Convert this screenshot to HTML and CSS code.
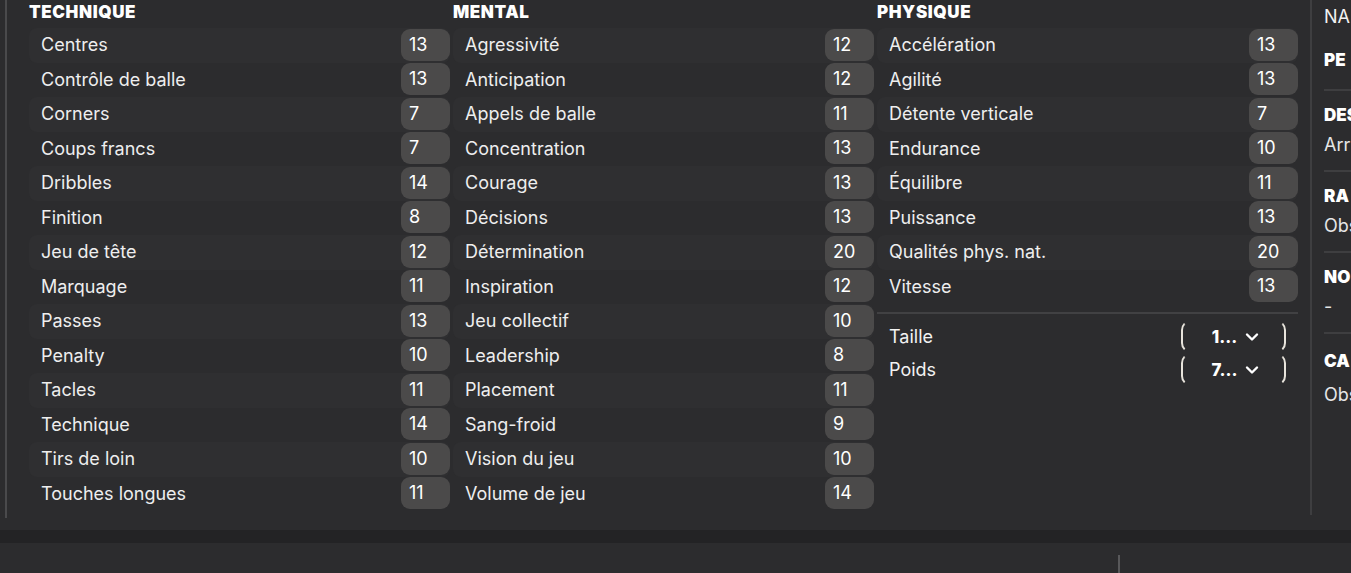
FILE: index.html
```html
<!DOCTYPE html>
<html lang="fr">
<head>
  <meta charset="UTF-8" />
  <title>Attributs</title>
  <link rel="stylesheet" href="styles.css">
</head>
<body>
  <div class="page">
    <div class="attrs">
      <section class="col">
        <h2>Technique</h2>
        <div class="row"><span>Centres</span><b class="val">13</b></div>
        <div class="row"><span>Contrôle de balle</span><b class="val">13</b></div>
        <div class="row"><span>Corners</span><b class="val">7</b></div>
        <div class="row"><span>Coups francs</span><b class="val">7</b></div>
        <div class="row"><span>Dribbles</span><b class="val">14</b></div>
        <div class="row"><span>Finition</span><b class="val">8</b></div>
        <div class="row"><span>Jeu de tête</span><b class="val">12</b></div>
        <div class="row"><span>Marquage</span><b class="val">11</b></div>
        <div class="row"><span>Passes</span><b class="val">13</b></div>
        <div class="row"><span>Penalty</span><b class="val">10</b></div>
        <div class="row"><span>Tacles</span><b class="val">11</b></div>
        <div class="row"><span>Technique</span><b class="val">14</b></div>
        <div class="row"><span>Tirs de loin</span><b class="val">10</b></div>
        <div class="row"><span>Touches longues</span><b class="val">11</b></div>
      </section>

      <section class="col">
        <h2>Mental</h2>
        <div class="row"><span>Agressivité</span><b class="val">12</b></div>
        <div class="row"><span>Anticipation</span><b class="val">12</b></div>
        <div class="row"><span>Appels de balle</span><b class="val">11</b></div>
        <div class="row"><span>Concentration</span><b class="val">13</b></div>
        <div class="row"><span>Courage</span><b class="val">13</b></div>
        <div class="row"><span>Décisions</span><b class="val">13</b></div>
        <div class="row"><span>Détermination</span><b class="val">20</b></div>
        <div class="row"><span>Inspiration</span><b class="val">12</b></div>
        <div class="row"><span>Jeu collectif</span><b class="val">10</b></div>
        <div class="row"><span>Leadership</span><b class="val">8</b></div>
        <div class="row"><span>Placement</span><b class="val">11</b></div>
        <div class="row"><span>Sang-froid</span><b class="val">9</b></div>
        <div class="row"><span>Vision du jeu</span><b class="val">10</b></div>
        <div class="row"><span>Volume de jeu</span><b class="val">14</b></div>
      </section>

      <section class="col">
        <h2>Physique</h2>
        <div class="row"><span>Accélération</span><b class="val">13</b></div>
        <div class="row"><span>Agilité</span><b class="val">13</b></div>
        <div class="row"><span>Détente verticale</span><b class="val">7</b></div>
        <div class="row"><span>Endurance</span><b class="val">10</b></div>
        <div class="row"><span>Équilibre</span><b class="val">11</b></div>
        <div class="row"><span>Puissance</span><b class="val">13</b></div>
        <div class="row"><span>Qualités phys. nat.</span><b class="val">20</b></div>
        <div class="row"><span>Vitesse</span><b class="val">13</b></div>

        <div class="body-info">
          <div class="info-row">
            <span>Taille</span>
            <button class="select">1... <svg width="14" height="10" viewBox="0 0 14 10"><path d="M2 2.5l5 5 5-5" fill="none" stroke="#fff" stroke-width="2.4" stroke-linecap="round" stroke-linejoin="round"/></svg></button>
          </div>
          <div class="info-row">
            <span>Poids</span>
            <button class="select">7... <svg width="14" height="10" viewBox="0 0 14 10"><path d="M2 2.5l5 5 5-5" fill="none" stroke="#fff" stroke-width="2.4" stroke-linecap="round" stroke-linejoin="round"/></svg></button>
          </div>
        </div>
      </section>
    </div>

    <aside class="side">
      <div class="side-item plain">NA</div>
      <div class="side-item first"><h3>PE</h3></div>
      <div class="side-item"><h3>DES</h3><p>Arr</p></div>
      <div class="side-item"><h3>RA</h3><p>Obs</p></div>
      <div class="side-item"><h3>NO</h3><p>-</p></div>
      <div class="side-item last"><h3>CA</h3><p>Obs</p></div>
    </aside>
  </div>

  <div class="strip"></div>
  <footer class="footer">
    <div class="footer-sep"></div>
  </footer>
</body>
</html>
```

FILE: styles.css
```css
body {
  margin: 0;
  background: #2c2c2e;
  color: #f2f2f2;
  font-family: Inter, "Noto Sans", sans-serif;
  overflow: hidden;
  width: 1351px;
  height: 573px;
}

.page {
  display: flex;
  height: 530px;
}

.attrs {
  margin-left: 5px;
  border-left: 2px solid #4a4a4c;
  padding-left: 22px;
  width: 1283px;
  height: 518px;
  display: grid;
  grid-template-columns: repeat(3, 424px);
  align-content: start;
}

.col h2 {
  margin: 0 0 4px 0;
  height: 24px;
  line-height: 24px;
  font-size: 17px;
  font-weight: 900;
  text-transform: uppercase;
  letter-spacing: 0.6px;
  color: #fff;
}

.row {
  height: 34.5px;
  width: 421px;
  display: flex;
  align-items: center;
  justify-content: space-between;
  border-radius: 8px;
  box-sizing: border-box;
  padding-left: 12px;
  padding-bottom: 1px;
  font-size: 18px;
  color: #eeeeee;
}

.row:nth-of-type(odd) {
  background: #2f2f31;
}

.val {
  width: 49px;
  height: 32px;
  line-height: 31px;
  box-sizing: border-box;
  padding-left: 8px;
  border-radius: 9px;
  background: #4b4a4a;
  font-weight: 400;
  font-size: 18px;
  color: #fff;
}

.body-info {
  margin-top: 8px;
  border-top: 2px solid #414143;
  width: 421px;
  padding-top: 6px;
}

.info-row {
  height: 33px;
  display: flex;
  align-items: center;
  justify-content: space-between;
  padding-left: 12px;
  padding-right: 12px;
  font-size: 18px;
}

.select {
  width: 105px;
  height: 33px;
  box-sizing: border-box;
  background: transparent;
  border: 2px solid transparent;
  border-left-color: #e8e4dc;
  border-right-color: #e8e4dc;
  border-radius: 10px;
  color: #fff;
  font-family: inherit;
  font-size: 17px;
  font-weight: 800;
  display: flex;
  align-items: center;
  justify-content: center;
  gap: 8px;
  padding: 0 0 0 4px;
}

.side {
  border-left: 2px solid #3e3e40;
  height: 515px;
  padding-left: 12px;
  width: 27px;
  overflow: hidden;
  white-space: nowrap;
}

.side-item {
  border-bottom: 2px solid #3e3e40;
  height: 81px;
  box-sizing: border-box;
  padding-top: 14px;
}

.side-item.plain {
  border-bottom: none;
  height: 40px;
  padding-top: 6px;
  font-size: 18px;
  line-height: 22px;
}

.side-item.first {
  height: 51px;
  padding-top: 10px;
}

.side-item h3 {
  margin: 0;
  font-size: 17px;
  font-weight: 900;
  color: #fff;
  line-height: 20px;
}

.side-item p {
  margin: 9px 0 0 0;
  font-size: 18px;
  line-height: 22px;
  color: #e6e6e6;
}

.side-item.last {
  border-bottom: none;
  padding-top: 17px;
}

.side-item.last p {
  margin-top: 13px;
}

.strip {
  height: 13px;
  background: #232325;
}

.footer {
  height: 30px;
}

.footer-sep {
  margin-left: 1118px;
  margin-top: 12px;
  width: 2px;
  height: 18px;
  background: #58585a;
}
```
